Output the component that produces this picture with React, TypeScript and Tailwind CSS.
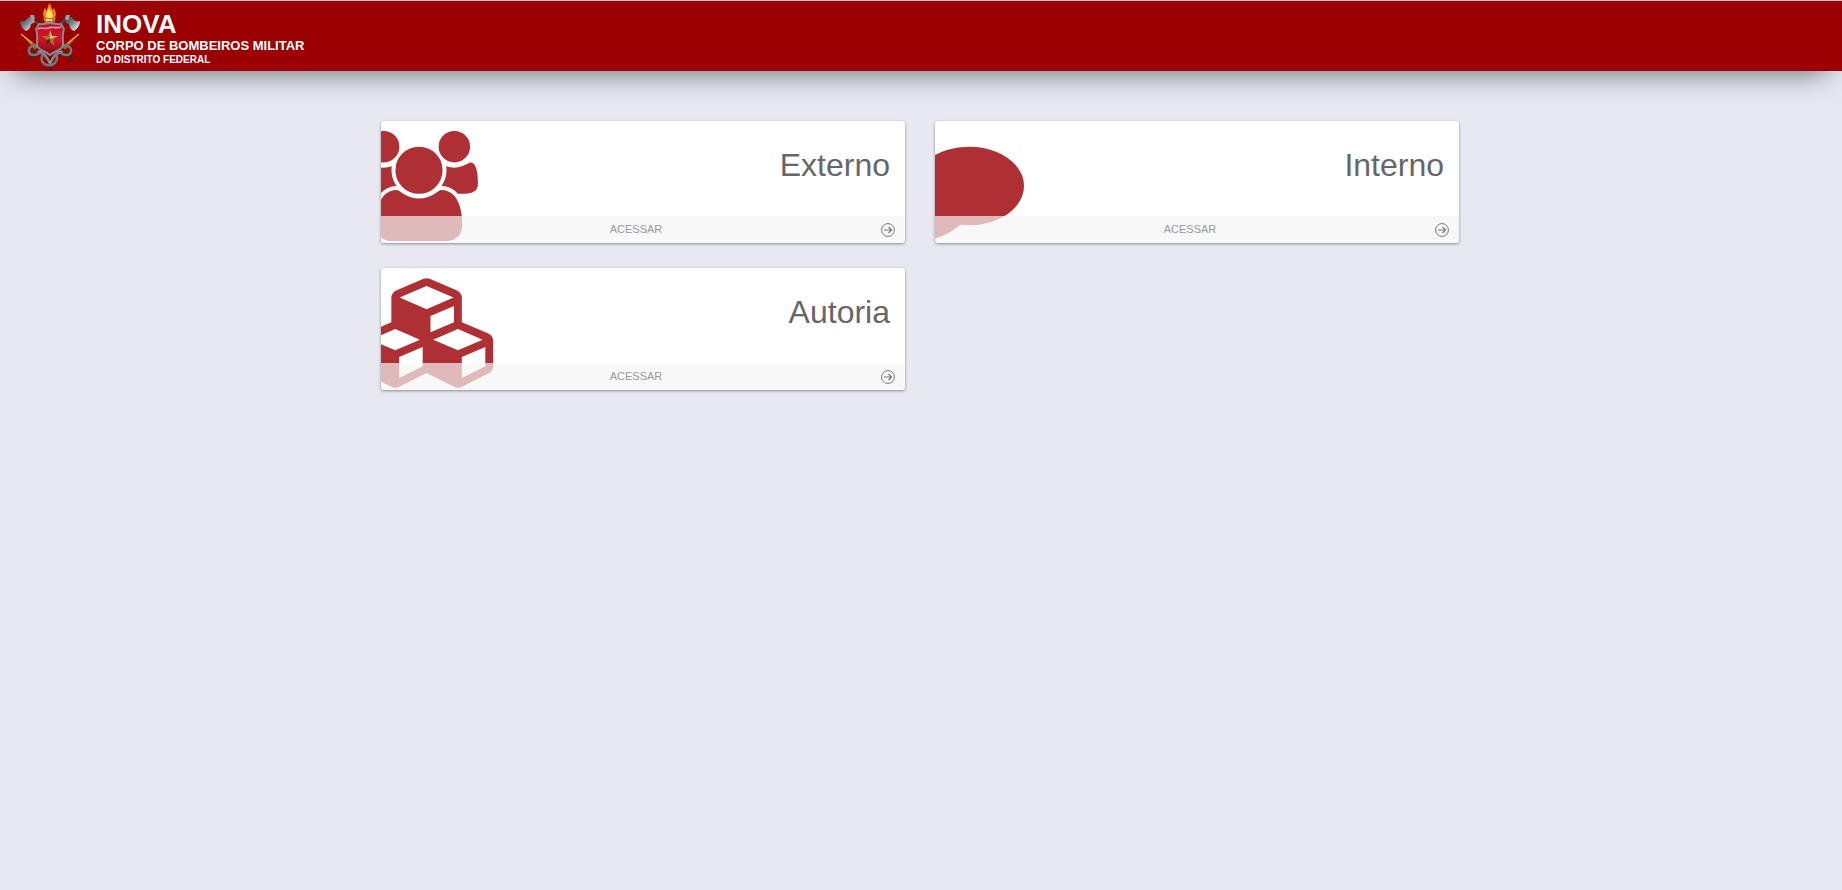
import React from "react";

type Panel = {
  title: string;
  href: string;
  viewBox: string;
  iconClass: string;
  path: string;
};

const panels: Panel[] = [
  {
    title: "Externo",
    href: "#externo",
    viewBox: "64 0 1920 1792",
    iconClass: "w-[118px]",
    path: "M657 896q-162 5-265 128h-134q-82 0-138-40.5t-56-118.5q0-353 124-353 6 0 43.5 21t97.5 42.5 119 21.5q67 0 133-23-5 37-5 66 0 139 81 256zm1071 637q0 120-73 189.5t-194 69.5h-874q-121 0-194-69.5t-73-189.5q0-53 3.5-103.5t14-109 26.5-108.5 43-97.5 62-81 85.5-53.5 111.5-20q10 0 43 21.5t73 48 107 48 135 21.5 135-21.5 107-48 73-48 43-21.5q61 0 111.5 20t85.5 53.5 62 81 43 97.5 26.5 108.5 14 109 3.5 103.5zm-1024-1277q0 106-75 181t-181 75-181-75-75-181 75-181 181-75 181 75 75 181zm704 384q0 159-112.5 271.5t-271.5 112.5-271.5-112.5-112.5-271.5 112.5-271.5 271.5-112.5 271.5 112.5 112.5 271.5zm576 225q0 78-56 118.5t-138 40.5h-134q-103-123-265-128 81-117 81-256 0-29-5-66 66 23 133 23 59 0 119-21.5t97.5-42.5 43.5-21q124 0 124 353zm-128-609q0 106-75 181t-181 75-181-75-75-181 75-181 181-75 181 75 75 181z",
  },
  {
    title: "Interno",
    href: "#interno",
    viewBox: "0 0 1792 1792",
    iconClass: "w-[110px]",
    path: "M1792 896q0 174-120 321.5t-326 233-450 85.5q-70 0-145-8-198 175-460 242-49 14-114 22-17 2-30.5-9t-17.5-29v-1q-3-4-.5-12t2-10 4.5-9.5l6-9 7-8.5 8-9q7-8 31-34.5t34.5-38 31-39.5 32.5-51 27-59 26-76q-157-89-247.5-220t-90.5-281q0-130 71-248.5t191-204.5 286-136.5 348-50.5q244 0 450 85.5t326 233 120 321.5z",
  },
  {
    title: "Autoria",
    href: "#autoria",
    viewBox: "0 0 2304 1792",
    iconClass: "w-[141px]",
    path: "M640 1632l384-192v-314l-384 164v342zm-64-454l404-173-404-173-404 173zm1088 454l384-192v-314l-384 164v342zm-64-454l404-173-404-173-404 173zm-448-293l384-165v-266l-384 164v267zm-64-379l441-189-441-189-441 189zm1088 518v416q0 36-19 67t-52 47l-448 224q-25 14-57 14t-57-14l-448-224q-4-2-7-4-2 2-7 4l-448 224q-25 14-57 14t-57-14l-448-224q-33-16-52-47t-19-67v-416q0-38 21.5-70t56.5-48l434-186v-400q0-38 21.5-70t56.5-48l448-192q23-10 50-10t50 10l448 192q35 16 56.5 48t21.5 70v400l434 186q36 16 57 48t21 70z",
  },
];

function Crest() {
  return (
    <svg viewBox="0 0 60 68" className="h-[68px] w-[60px]" aria-hidden="true">
      <defs>
        <linearGradient id="shield" x1="0" y1="0" x2="0" y2="1">
          <stop offset="0" stopColor="#b80f24" />
          <stop offset="0.5" stopColor="#d4142c" />
          <stop offset="1" stopColor="#7c0810" />
        </linearGradient>
        <linearGradient id="steel" x1="0" y1="0" x2="1" y2="1">
          <stop offset="0" stopColor="#23343c" />
          <stop offset="0.5" stopColor="#7f8c93" />
          <stop offset="0.8" stopColor="#d5dde0" />
          <stop offset="1" stopColor="#4d565b" />
        </linearGradient>
      </defs>
      {/* axe handles */}
      <path d="M11 15 21 25M47 15 38 25" stroke="#4c4548" strokeWidth="2.4" />
      <path d="M17 46 8 59M42 46 52 59" stroke="#5e1d0c" strokeWidth="4" />
      {/* axe blades */}
      <path d="M0 19c3 1 6 0 8-3l3-2 4 6-4 2c0 3-2 6-5 7-3-2-6-5-6-10z" fill="url(#steel)" />
      <path d="M60 19c-3 1-6 0-8-3l-3-2-4 6 4 2c0 3 2 6 5 7 3-2 6-5 6-10z" fill="url(#steel)" />
      <path d="m10 13 4 0 1 4-3 2zM50 13l-4 0-1 4 3 2z" fill="#9aa2a6" />
      {/* nozzles */}
      <path d="m1 32 17 12-3 4zM59 32 42 44l3 4z" fill="#a8661c" />
      <path d="m1 32 11 9M59 32l-11 9" stroke="#dfa94a" strokeWidth="1.4" />
      {/* torch */}
      <path d="M29 48h3v20h-3z" fill="#4e1a10" />
      <path d="M25 17c-3-4-2-8 0-11 1 1 1 2 2 3 0-3 1-6 3-8 1 2 1 5 3 7l1-2c2 4 3 8 0 11z" fill="#ef8414" />
      <path d="M27 16c-2-4 0-7 2-10 2 3 5 6 3 10z" fill="#ffe45c" />
      <path d="M23 16h13l-2 5h-9z" fill="#b9792a" />
      <path d="M26 17h6v2h-6z" fill="#f2d070" />
      {/* hose */}
      <g fill="none" stroke="#74797e" strokeWidth="2.4">
        <path d="M17 44c-6-1-9 2-8 6 1 4 8 4 11 0M43 44c6-1 9 2 8 6-1 4-8 4-11 0" />
        <path d="M17 50c6 0 10 5 13 12M43 50c-6 0-10 5-13 12" />
        <path d="M23 52c-3 5-1 10 4 11 7 2 12-5 9-11" />
      </g>
      <path
        d="M18 49c5 0 9 4 12 12M42 49c-5 0-9 4-12 12"
        fill="none"
        stroke="#aeb4b8"
        strokeWidth="0.8"
      />
      {/* shield */}
      <path d="M19 22c4 1 8-1 11-1s7 2 11 1l3 5c-2 5-1 10-1 16 0 5-9 6-13 10-4-4-13-5-13-10 0-6 1-11-1-16z" fill="url(#shield)" stroke="#8b8a90" strokeWidth="2" />
      <path d="M18 27c4-3 6 1 10-1s8 1 13-1" fill="none" stroke="#f09aac" strokeWidth="1.6" />
      <path d="m30 28 2 6h6l-5 4 2 6-5-4-5 4 2-6-5-4h6z" fill="#a8742c" />
      <path d="m30 28 2 6h6l-8 3z" fill="#e0bd7a" />
      <path d="m25 44 2-6 3-1v3z" fill="#4a250c" />
    </svg>
  );
}

function PanelCard({ panel }: { panel: Panel }) {
  return (
    <a
      href={panel.href}
      className="relative flex h-[122px] flex-col justify-between overflow-hidden rounded-[3px] bg-white shadow-[0_1px_3px_rgba(0,0,0,0.4)]"
    >
      <svg
        viewBox={panel.viewBox}
        className={`absolute top-[10px] -left-[21px] h-[110px] fill-[#ae3034] ${panel.iconClass}`}
        aria-hidden="true"
      >
        <path d={panel.path} />
      </svg>
      <h2 className="pt-6 pr-[15px] text-right text-[32px] leading-10 text-[#666]">
        {panel.title}
      </h2>
      <div className="relative flex h-[27px] items-center bg-[#f5f5f5]/70 px-[10px]">
        <span className="flex-1 pb-[2px] text-center text-[11px] leading-4 text-[#999]">
          ACESSAR
        </span>
        <svg
          viewBox="0 0 14 14"
          className="size-[14px] fill-none stroke-[#777]"
          aria-hidden="true"
        >
          <circle cx="7" cy="7" r="6.4" />
          <path d="M3 7h7.5M7.5 4l3 3-3 3" strokeWidth="1.2" />
        </svg>
      </div>
    </a>
  );
}

export default function App() {
  return (
    <div className="min-h-screen bg-[#e7e8f0] font-['Liberation_Sans',Arial,sans-serif]">
      <header className="border-t border-[#c4c4c4] bg-[#9b0003] shadow-[0_15px_30px_-15px_rgba(0,0,0,0.6)]">
        <a href="#inicio" className="flex h-[70px] w-fit items-center pl-5 text-white">
          <Crest />
          <div className="pt-1 pl-4 font-bold">
            <h1 className="text-[26px] leading-7">INOVA</h1>
            <p className="text-[13px] leading-4">CORPO DE BOMBEIROS MILITAR</p>
            <p className="text-[10px] leading-3">DO DISTRITO FEDERAL</p>
          </div>
        </a>
      </header>
      <main className="mx-auto grid max-w-[1140px] grid-cols-1 gap-x-[30px] gap-y-[25px] pt-[50px] pr-8 pl-[30px] md:grid-cols-2">
        {panels.map((panel) => (
          <PanelCard key={panel.title} panel={panel} />
        ))}
      </main>
    </div>
  );
}
